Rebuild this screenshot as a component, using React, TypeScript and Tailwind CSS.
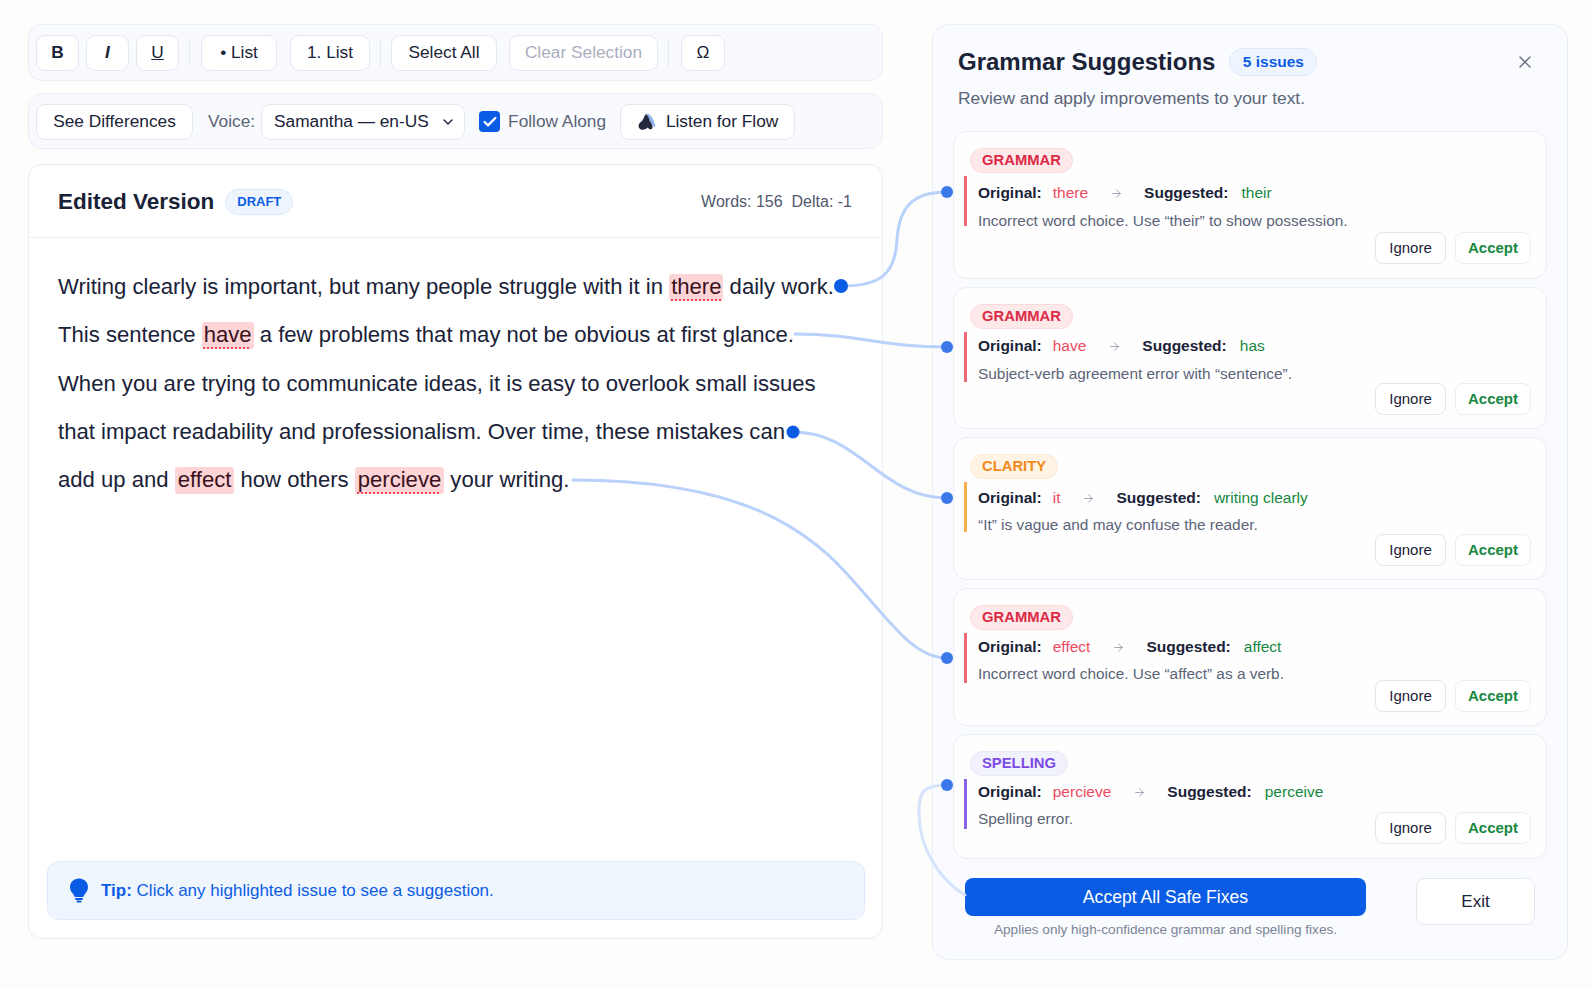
import { ArrowRight, ChevronDown, Check, X } from 'lucide-react';

const btn = 'h-9 flex items-center justify-center rounded-[9px] border border-[#e3e8f2] bg-white text-[17.3px] text-[#1a2238]';

const cards = [
  { tag: 'GRAMMAR', tagCls: 'bg-[#fde8ea] border-[#fbd9dd] text-[#dc2a45]', bar: 'border-[#ec6a78]', from: 'there', to: 'their', note: 'Incorrect word choice. Use “their” to show possession.', h: 'h-[148px]', act: 'mt-[6px]', body: 'pt-[5px]', noteMt: 'mt-[6px]' },
  { tag: 'GRAMMAR', tagCls: 'bg-[#fde8ea] border-[#fbd9dd] text-[#dc2a45]', bar: 'border-[#ec6a78]', from: 'have', to: 'has', note: 'Subject-verb agreement error with “sentence”.', h: 'h-[142px]', act: 'mt-[1px]', body: 'pt-[2px]', noteMt: 'mt-[6px]' },
  { tag: 'CLARITY', tagCls: 'bg-[#fff3e4] border-[#fdebd4] text-[#f08a1d]', bar: 'border-[#f8b04f]', from: 'it', to: 'writing clearly', note: '“It” is vague and may confuse the reader.', h: 'h-[143px]', act: 'mt-[2px]', body: 'pt-[4px]', noteMt: 'mt-[5px]' },
  { tag: 'GRAMMAR', tagCls: 'bg-[#fde8ea] border-[#fbd9dd] text-[#dc2a45]', bar: 'border-[#ec6a78]', from: 'effect', to: 'affect', note: 'Incorrect word choice. Use “affect” as a verb.', h: 'h-[138px]', act: '-mt-[3px]', body: 'pt-[2px]', noteMt: 'mt-[5px]' },
  { tag: 'SPELLING', tagCls: 'bg-[#f1f2fc] border-[#e8eaf8] text-[#7c4ae6]', bar: 'border-[#8b62e6]', from: 'percieve', to: 'perceive', note: 'Spelling error.', h: 'h-[125px]', act: '-mt-[17px]', body: 'pt-[1px]', noteMt: 'mt-[5px]' },
];

function Sep() {
  return <div className="w-px h-[26px] bg-[#e3e8f2] mx-[3px]" />;
}

function Mark({ children, wavy, wide }: { children: string; wavy?: boolean; wide?: boolean }) {
  return (
    <span className={`rounded-[3px] bg-[#fdd5d6] pb-[2px] text-[#3a1020] ${wide ? 'px-[3px]' : 'px-[2px]'} ${wavy ? 'underline decoration-dotted decoration-[#e8475a] decoration-2 underline-offset-[5px]' : ''}`}>
      {children}
    </span>
  );
}

function Connectors() {
  return (
    <svg className="absolute inset-0 pointer-events-none" width="1593" height="987" fill="none">
      <g stroke="#b9d1fb" strokeWidth="3" strokeLinecap="round">
        <path d="M841 286 C880 286 895 275 897 240 C899 205 915 192 947 192" />
        <path d="M795 334 C860 334 880 347 947 347" />
        <path d="M793 432 C860 432 880 498 947 498" />
        <path d="M573 480 C780 480 830 555 870 600 C900 635 920 658 947 658" />
        <path d="M947 785 C925 785 918 790 919 815 C920 850 940 880 965 895" stroke="#d5e3fc" />
      </g>
      <circle cx="841" cy="286" r="7" fill="#0b5ce5" />
      <circle cx="793" cy="432" r="6.5" fill="#0b5ce5" />
      <circle cx="947" cy="192" r="6" fill="#3b78ea" />
      <circle cx="947" cy="347" r="6" fill="#3b78ea" />
      <circle cx="947" cy="498" r="6" fill="#3b78ea" />
      <circle cx="947" cy="658" r="6" fill="#3b78ea" />
      <circle cx="947" cy="785" r="6" fill="#3b78ea" />
    </svg>
  );
}

export default function App() {
  return (
    <div className="relative w-[1593px] h-[987px] overflow-hidden bg-[#fdfdfc] flex gap-[49px] pl-[28px] pt-[24px] [font-family:'Liberation_Sans',Arial,sans-serif] text-[#1a2238]">
      {/* left column */}
      <div className="w-[855px] flex flex-col">
        <div className="h-[57px] rounded-[14px] border border-[#e9edf5] bg-[#f9fafd] flex items-center pl-[7px] gap-[7px]">
          <div className={`${btn} w-[43px] font-bold`}>B</div>
          <div className={`${btn} w-[43px] italic font-bold`}>I</div>
          <div className={`${btn} w-[43px] underline`}>U</div>
          <Sep />
          <div className={`${btn} w-[76px] ml-[1px]`}>• List</div>
          <div className={`${btn} w-[80px] ml-[6px]`}>1. List</div>
          <Sep />
          <div className={`${btn} w-[106px]`}>Select All</div>
          <div className={`${btn} w-[149px] ml-[5px] !text-[#a9afbe]`}>Clear Selection</div>
          <Sep />
          <div className={`${btn} w-[44px] ml-[2px]`}>Ω</div>
        </div>

        <div className="h-[56px] mt-[12px] rounded-[14px] border border-[#e9edf5] bg-[#f9fafd] flex items-center pl-[7px] pt-[1px]">
          <div className={`${btn} w-[157px]`}>See Differences</div>
          <span className="ml-[15px] text-[17.3px] text-[#5b6478]">Voice:</span>
          <div className={`${btn} w-[204px] ml-[6px] !justify-between pl-[12px] pr-[8px]`}>
            Samantha — en-US
            <ChevronDown size={16} strokeWidth={2} />
          </div>
          <div className="ml-[14px] w-[21px] h-[21px] rounded-[4px] bg-[#0b5ce5] flex items-center justify-center">
            <Check size={16} strokeWidth={3.5} className="text-white" />
          </div>
          <span className="ml-[8px] w-[98px] whitespace-nowrap text-[17.3px] text-[#5b6478]">Follow Along</span>
          <div className={`${btn} w-[175px] ml-[14px] gap-[9px]`}>
            <svg width="20" height="20" viewBox="0 0 18 18">
              <path d="M8 1.5 C11 1 13 4 14.5 7 C16 10 17 13 16 14 C14 12 11 7 8 1.5Z" fill="#8fb4ee" />
              <path d="M8 2 C10 3 11 6 11.5 8 C13 10 15 13 13.5 15 C12 16.5 10.5 15 9.5 14 C8 16 4 16.5 2.5 15 C0.5 13 1.5 10 4 8.5 C6 7 6 4 8 2Z" fill="#232a3d" />
            </svg>
            Listen for Flow
          </div>
        </div>

        <div className="h-[775px] mt-[15px] rounded-[14px] border border-[#e9edf5] bg-white flex flex-col">
          <div className="h-[73px] shrink-0 border-b border-[#e9edf5] flex items-center justify-between pl-[29px] pr-[30px] pt-[2px]">
            <div className="flex items-center gap-[11px]">
              <span className="text-[22.5px] font-bold">Edited Version</span>
              <span className="h-[26px] w-[68px] rounded-full border border-[#dbe8fb] bg-[#eff5fe] flex items-center justify-center text-[13px] font-bold text-[#0b5ce5]">DRAFT</span>
            </div>
            <span className="text-[16px] text-[#4f586c]">Words: 156&nbsp; Delta: -1</span>
          </div>
          <div className="pl-[29px] pt-[25px] text-[22.1px] leading-[48.3px] text-[#1a2238] whitespace-nowrap">
            <div>Writing clearly is important, but many people struggle with it in <Mark wavy>there</Mark> daily work.</div>
            <div>This sentence <Mark wavy>have</Mark> a few problems that may not be obvious at first glance.</div>
            <div>When you are trying to communicate ideas, it is easy to overlook small issues</div>
            <div>that impact readability and professionalism. Over time, these mistakes can</div>
            <div>add up and <Mark wide>effect</Mark> how others <Mark wavy wide>percieve</Mark> your writing.</div>
          </div>
          <div className="mt-auto mb-[18px] ml-[18px] mr-[17px] h-[59px] rounded-[12px] border border-[#dfeafb] bg-[#f0f6fe] flex items-center pl-[21px] gap-[12px] text-[17px] text-[#0b5ce5]">
            <svg width="20" height="25" viewBox="0 0 20 25" fill="#0b5ce5">
              <path d="M10 0.5 C4.8 0.5 1 4.4 1 9.2 C1 12.6 3 14.6 4.4 16.4 C5.2 17.4 5.6 18.2 5.7 19 L14.3 19 C14.4 18.2 14.8 17.4 15.6 16.4 C17 14.6 19 12.6 19 9.2 C19 4.4 15.2 0.5 10 0.5Z" />
              <rect x="6" y="20" width="8" height="2" rx="1" />
              <rect x="7.5" y="22.6" width="5" height="2" rx="1" />
            </svg>
            <span className="pt-[1px]"><b className="font-bold">Tip:</b> Click any highlighted issue to see a suggestion.</span>
          </div>
        </div>
      </div>

      {/* right panel */}
      <div className="w-[636px] h-[936px] rounded-[16px] border border-[#e9edf5] bg-[#f9fbfe] flex flex-col">
        <div className="h-[106px] shrink-0 pl-[25px] pr-[32px] pt-[22px]">
          <div className="flex items-center h-[30px]">
            <span className="text-[24px] font-bold">Grammar Suggestions</span>
            <span className="ml-[14px] h-[28px] w-[88px] rounded-full border border-[#dbe8fb] bg-[#eff5fe] flex items-center justify-center text-[15.5px] font-bold text-[#0b5ce5]">5 issues</span>
            <X size={20} strokeWidth={1.75} className="ml-auto text-[#6a7285]" />
          </div>
          <p className="mt-[8px] text-[17.4px] text-[#5b6478]">Review and apply improvements to your text.</p>
        </div>
        <div className="mx-[20px] flex flex-col gap-[8px]">
          {cards.map((c, i) => (
            <div key={i} className={`${c.h} rounded-[14px] border border-[#e9edf5] bg-[#fefefe] pt-[16px] pl-[10px] pr-[15px]`}>
              <span className={`ml-[6px] inline-flex h-[25px] items-center rounded-full border px-[11px] text-[14.8px] font-bold ${c.tagCls}`}>{c.tag}</span>
              <div className={`mt-[3px] h-[50px] border-l-[3px] pl-[11px] ${c.body} ${c.bar}`}>
                <div className="flex items-center text-[15.5px] leading-[24px]">
                  <b className="font-bold">Original:</b>
                  <span className="ml-[11px] text-[#ee4b5f]">{c.from}</span>
                  <ArrowRight size={13} strokeWidth={1.5} className="ml-[22px] text-[#8b93a4]" />
                  <b className="ml-[21px] font-bold">Suggested:</b>
                  <span className="ml-[13px] text-[#16883f]">{c.to}</span>
                </div>
                <p className={`${c.noteMt} text-[15.4px] leading-[20px] text-[#5b6478]`}>{c.note}</p>
              </div>
              <div className={`${c.act} flex justify-end gap-[9px]`}>
                <div className="h-[32px] w-[71px] rounded-[8px] border-[1.5px] border-[#e0e5ef] bg-white flex items-center justify-center text-[15px]">Ignore</div>
                <div className="h-[32px] w-[76px] rounded-[8px] border border-[#e9edf5] bg-white flex items-center justify-center text-[15px] font-bold text-[#16883f]">Accept</div>
              </div>
            </div>
          ))}
        </div>
        <div className="flex mt-[19px] pl-[32px]">
          <div className="w-[401px]">
            <div className="h-[38px] rounded-[8px] bg-[#0b5ce5] flex items-center justify-center text-white text-[17.6px]">Accept All Safe Fixes</div>
            <p className="mt-[4px] text-center text-[13.6px] text-[#7b8496]">Applies only high-confidence grammar and spelling fixes.</p>
          </div>
          <div className="ml-[50px] w-[119px] h-[47px] rounded-[9px] border-[1.5px] border-[#e3e8f2] bg-white flex items-center justify-center text-[17px]">Exit</div>
        </div>
      </div>

      <Connectors />
    </div>
  );
}
